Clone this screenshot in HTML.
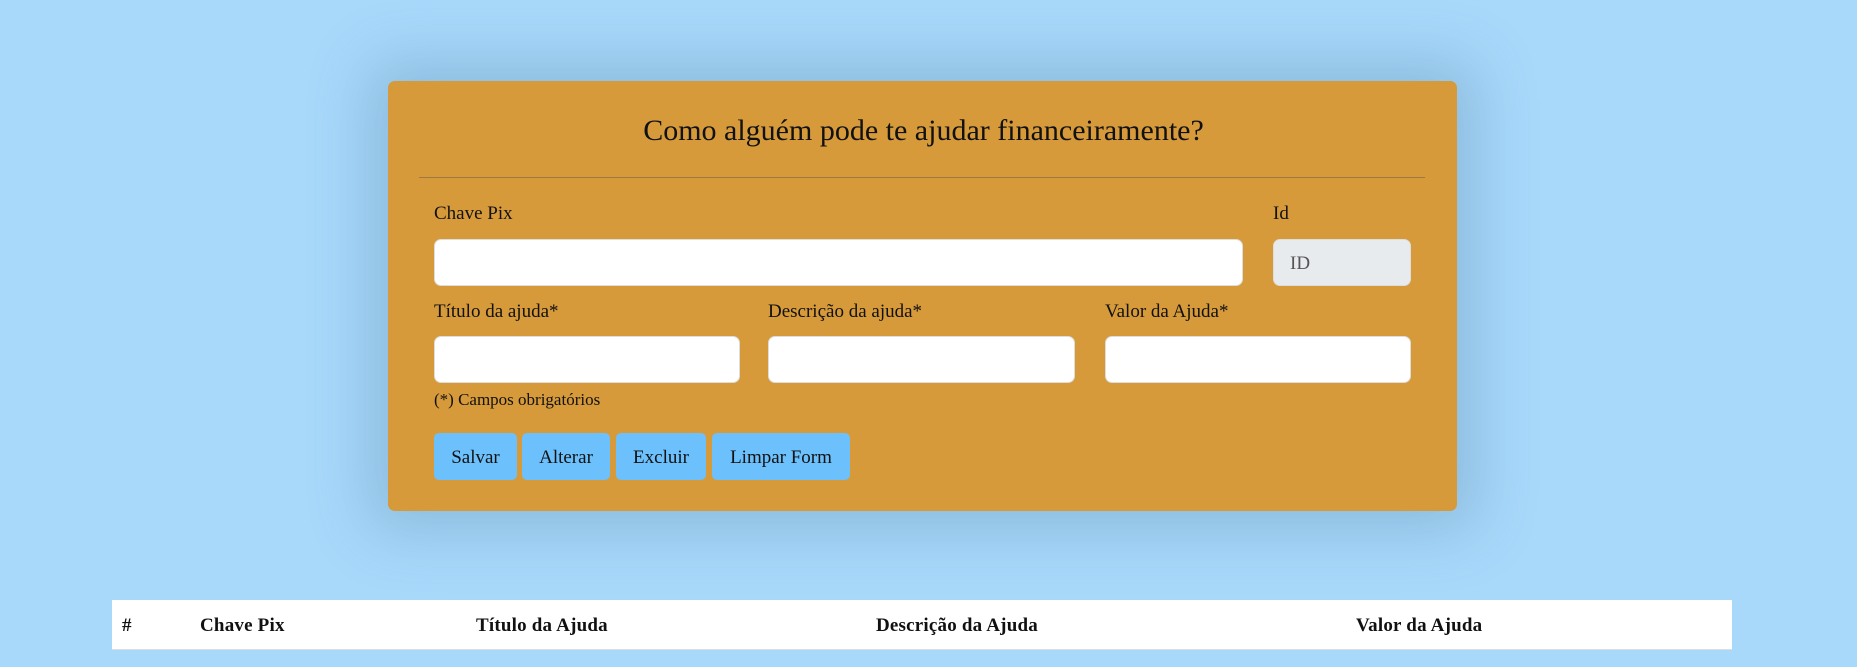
<!DOCTYPE html>
<html><head><meta charset="utf-8"><style>
*{box-sizing:border-box;margin:0;padding:0}
body{width:1857px;height:667px;background:#a8d9fb;font-family:"Liberation Serif",serif;color:#111;position:relative;overflow:hidden}
.card{position:absolute;left:388px;top:81px;width:1069px;height:430px;background:#d69a3b;border-radius:7px;box-shadow:0 0 60px 20px rgba(60,100,140,0.25)}
h1{position:absolute;left:-5px;width:100%;top:113px;text-align:center;font-weight:normal;font-size:30px;line-height:36px}
.hr{position:absolute;left:419px;width:1006px;top:177px;height:1px;background:#9d7a44}
.lbl{position:absolute;font-size:19px;line-height:22px}
.in{position:absolute;background:#fff;border:1px solid #ddd;border-radius:7px;height:47px}
.btn{position:absolute;top:433px;height:47px;background:#6cc0fc;border-radius:5px;font-size:19px;line-height:49px;text-align:center}
.tbl{position:absolute;left:112px;top:600px;width:1620px;height:50px;background:#fff;border-bottom:1px solid #ddd}
.th{position:absolute;top:15px;font-weight:bold;font-size:19px;line-height:22px;letter-spacing:0.2px}
</style></head><body>
<div class="card"></div>
<h1>Como alguém pode te ajudar financeiramente?</h1>
<div class="hr"></div>
<div class="lbl" style="left:434px;top:203px">Chave Pix</div>
<div class="lbl" style="left:1273px;top:203px">Id</div>
<div class="in" style="left:434px;top:239px;width:809px"></div>
<div class="in" style="left:1273px;top:239px;width:138px;background:#e8ebee;font-size:19px;line-height:47px;padding-left:16px;color:#555">ID</div>
<div class="lbl" style="left:434px;top:301px">Título da ajuda*</div>
<div class="lbl" style="left:768px;top:301px">Descrição da ajuda*</div>
<div class="lbl" style="left:1105px;top:301px">Valor da Ajuda*</div>
<div class="in" style="left:434px;top:336px;width:306px"></div>
<div class="in" style="left:768px;top:336px;width:307px"></div>
<div class="in" style="left:1105px;top:336px;width:306px"></div>
<div class="lbl" style="left:434px;top:389px;font-size:17px">(*) Campos obrigatórios</div>
<div class="btn" style="left:434px;width:83px">Salvar</div>
<div class="btn" style="left:522px;width:88px">Alterar</div>
<div class="btn" style="left:616px;width:90px">Excluir</div>
<div class="btn" style="left:712px;width:138px">Limpar Form</div>
<div class="tbl">
<div class="th" style="left:10px">#</div>
<div class="th" style="left:88px">Chave Pix</div>
<div class="th" style="left:364px">Título da Ajuda</div>
<div class="th" style="left:764px">Descrição da Ajuda</div>
<div class="th" style="left:1244px">Valor da Ajuda</div>
</div>
</body></html>
